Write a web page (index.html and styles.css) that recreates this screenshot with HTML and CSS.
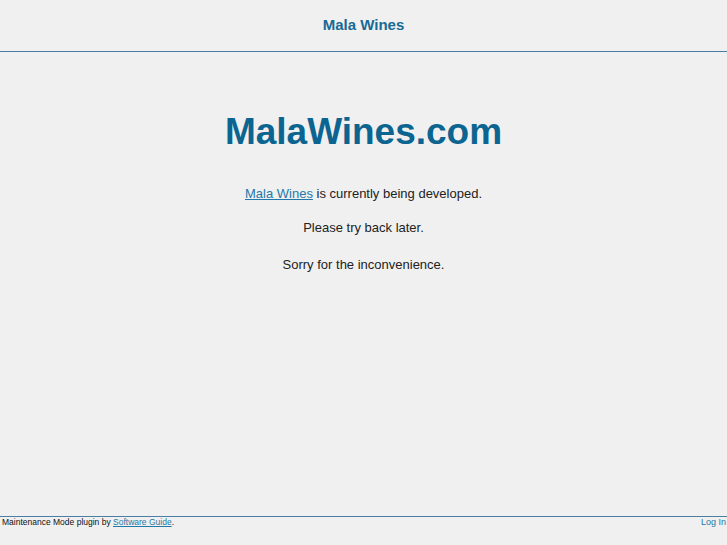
FILE: index.html
```html
<!DOCTYPE html>
<html>
<head>
<meta charset="utf-8">
<link rel="stylesheet" href="styles.css">
</head>
<body>
<div class="page">
  <header class="header"><span class="site-name">Mala Wines</span></header>
  <main class="content">
    <h1 class="title">MalaWines.com</h1>
    <p class="msg msg-first"><a href="#">Mala Wines</a> is currently being developed.</p>
    <p class="msg msg-second">Please try back later.</p>
    <p class="msg">Sorry for the inconvenience.</p>
  </main>
  <footer class="footer">
    <span class="credit">Maintenance Mode plugin by <a href="#">Software Guide</a>.</span>
    <a href="#" class="login">Log In</a>
  </footer>
</div>
</body>
</html>
```
FILE: styles.css
```css
html, body {
  margin: 0;
  padding: 0;
  height: 100%;
  background: #f0f0f0;
  font-family: "Liberation Sans", Arial, sans-serif;
}
.page {
  display: flex;
  flex-direction: column;
  height: 545px;
}
.header {
  height: 51px;
  border-bottom: 1px solid #4a7fa3;
  display: flex;
  align-items: center;
  justify-content: center;
}
.site-name {
  color: #186a94;
  font-weight: bold;
  font-size: 15px;
  margin-top: -3px;
}
.content {
  flex: 1;
  text-align: center;
  color: #222;
}
.title {
  margin: 57px 0 32px;
  font-size: 37px;
  line-height: 45px;
  color: #0b6590;
  font-weight: bold;
}
.msg {
  margin: 0;
  font-size: 13px;
  line-height: 16px;
}
.msg-first { margin-bottom: 18px; }
.msg-second { margin-bottom: 21px; }
.msg a {
  color: #1f78a8;
}
.footer {
  border-top: 1px solid #4a7fa3;
  height: 28px;
  display: flex;
  justify-content: space-between;
  align-items: flex-start;
  color: #111;
  padding: 0 1px 0 2px;
}
.credit { font-size: 8.5px; }
.footer a { color: #1f78a8; }
.footer .login { font-size: 9px; text-decoration: none; }
```
